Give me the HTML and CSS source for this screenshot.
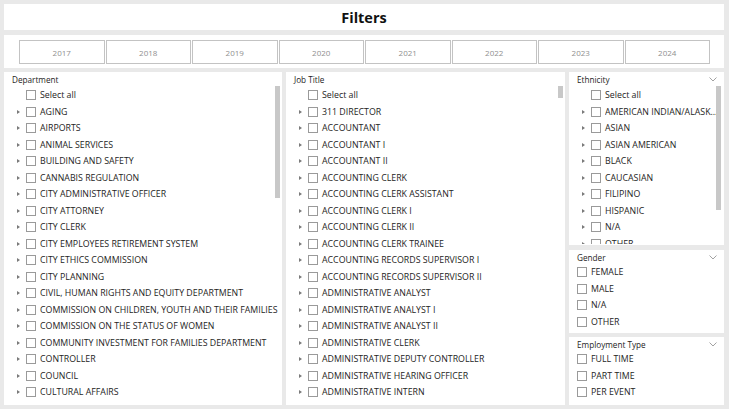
FILE: index.html
```html
<!DOCTYPE html>
<html>
<head>
<meta charset="utf-8">
<link rel="stylesheet" href="styles.css">
</head>
<body>
<div class="page">
  <div class="card title-card">Filters</div>
  <div class="card years">
    <div class="year">2017</div>
    <div class="year">2018</div>
    <div class="year">2019</div>
    <div class="year">2020</div>
    <div class="year">2021</div>
    <div class="year">2022</div>
    <div class="year">2023</div>
    <div class="year">2024</div>
  </div>
  <div class="panels">
    <div class="card slicer dept">
      <div class="slicer-head">Department</div>
      <div class="list">
        <div class="row"><span class="tri none"></span><span class="box"></span><span class="lbl">Select all</span></div>
        <div class="row"><span class="tri"></span><span class="box"></span><span class="lbl">AGING</span></div>
        <div class="row"><span class="tri"></span><span class="box"></span><span class="lbl">AIRPORTS</span></div>
        <div class="row"><span class="tri"></span><span class="box"></span><span class="lbl">ANIMAL SERVICES</span></div>
        <div class="row"><span class="tri"></span><span class="box"></span><span class="lbl">BUILDING AND SAFETY</span></div>
        <div class="row"><span class="tri"></span><span class="box"></span><span class="lbl">CANNABIS REGULATION</span></div>
        <div class="row"><span class="tri"></span><span class="box"></span><span class="lbl">CITY ADMINISTRATIVE OFFICER</span></div>
        <div class="row"><span class="tri"></span><span class="box"></span><span class="lbl">CITY ATTORNEY</span></div>
        <div class="row"><span class="tri"></span><span class="box"></span><span class="lbl">CITY CLERK</span></div>
        <div class="row"><span class="tri"></span><span class="box"></span><span class="lbl">CITY EMPLOYEES RETIREMENT SYSTEM</span></div>
        <div class="row"><span class="tri"></span><span class="box"></span><span class="lbl">CITY ETHICS COMMISSION</span></div>
        <div class="row"><span class="tri"></span><span class="box"></span><span class="lbl">CITY PLANNING</span></div>
        <div class="row"><span class="tri"></span><span class="box"></span><span class="lbl">CIVIL, HUMAN RIGHTS AND EQUITY DEPARTMENT</span></div>
        <div class="row"><span class="tri"></span><span class="box"></span><span class="lbl">COMMISSION ON CHILDREN, YOUTH AND THEIR FAMILIES</span></div>
        <div class="row"><span class="tri"></span><span class="box"></span><span class="lbl">COMMISSION ON THE STATUS OF WOMEN</span></div>
        <div class="row"><span class="tri"></span><span class="box"></span><span class="lbl">COMMUNITY INVESTMENT FOR FAMILIES DEPARTMENT</span></div>
        <div class="row"><span class="tri"></span><span class="box"></span><span class="lbl">CONTROLLER</span></div>
        <div class="row"><span class="tri"></span><span class="box"></span><span class="lbl">COUNCIL</span></div>
        <div class="row"><span class="tri"></span><span class="box"></span><span class="lbl">CULTURAL AFFAIRS</span></div>
      </div>
      <div class="thumb dept-thumb"></div>
    </div>
    <div class="card slicer job">
      <div class="slicer-head">Job Title</div>
      <div class="list">
        <div class="row"><span class="tri none"></span><span class="box"></span><span class="lbl">Select all</span></div>
        <div class="row"><span class="tri"></span><span class="box"></span><span class="lbl">311 DIRECTOR</span></div>
        <div class="row"><span class="tri"></span><span class="box"></span><span class="lbl">ACCOUNTANT</span></div>
        <div class="row"><span class="tri"></span><span class="box"></span><span class="lbl">ACCOUNTANT I</span></div>
        <div class="row"><span class="tri"></span><span class="box"></span><span class="lbl">ACCOUNTANT II</span></div>
        <div class="row"><span class="tri"></span><span class="box"></span><span class="lbl">ACCOUNTING CLERK</span></div>
        <div class="row"><span class="tri"></span><span class="box"></span><span class="lbl">ACCOUNTING CLERK ASSISTANT</span></div>
        <div class="row"><span class="tri"></span><span class="box"></span><span class="lbl">ACCOUNTING CLERK I</span></div>
        <div class="row"><span class="tri"></span><span class="box"></span><span class="lbl">ACCOUNTING CLERK II</span></div>
        <div class="row"><span class="tri"></span><span class="box"></span><span class="lbl">ACCOUNTING CLERK TRAINEE</span></div>
        <div class="row"><span class="tri"></span><span class="box"></span><span class="lbl">ACCOUNTING RECORDS SUPERVISOR I</span></div>
        <div class="row"><span class="tri"></span><span class="box"></span><span class="lbl">ACCOUNTING RECORDS SUPERVISOR II</span></div>
        <div class="row"><span class="tri"></span><span class="box"></span><span class="lbl">ADMINISTRATIVE ANALYST</span></div>
        <div class="row"><span class="tri"></span><span class="box"></span><span class="lbl">ADMINISTRATIVE ANALYST I</span></div>
        <div class="row"><span class="tri"></span><span class="box"></span><span class="lbl">ADMINISTRATIVE ANALYST II</span></div>
        <div class="row"><span class="tri"></span><span class="box"></span><span class="lbl">ADMINISTRATIVE CLERK</span></div>
        <div class="row"><span class="tri"></span><span class="box"></span><span class="lbl">ADMINISTRATIVE DEPUTY CONTROLLER</span></div>
        <div class="row"><span class="tri"></span><span class="box"></span><span class="lbl">ADMINISTRATIVE HEARING OFFICER</span></div>
        <div class="row"><span class="tri"></span><span class="box"></span><span class="lbl">ADMINISTRATIVE INTERN</span></div>
      </div>
      <div class="thumb job-thumb"></div>
    </div>
    <div class="side">
      <div class="card slicer eth">
        <div class="slicer-head">Ethnicity</div>
        <svg class="chev" viewBox="0 0 8 5" width="8" height="5"><path d="M0.5 0.5 L4 4 L7.5 0.5" fill="none" stroke="#8a8a8a" stroke-width="0.8"/></svg>
        <div class="list clip">
          <div class="row"><span class="tri none"></span><span class="box"></span><span class="lbl">Select all</span></div>
          <div class="row"><span class="tri"></span><span class="box"></span><span class="lbl ell">AMERICAN INDIAN/ALASKAN NATIVE</span></div>
          <div class="row"><span class="tri"></span><span class="box"></span><span class="lbl">ASIAN</span></div>
          <div class="row"><span class="tri"></span><span class="box"></span><span class="lbl">ASIAN AMERICAN</span></div>
          <div class="row"><span class="tri"></span><span class="box"></span><span class="lbl">BLACK</span></div>
          <div class="row"><span class="tri"></span><span class="box"></span><span class="lbl">CAUCASIAN</span></div>
          <div class="row"><span class="tri"></span><span class="box"></span><span class="lbl">FILIPINO</span></div>
          <div class="row"><span class="tri"></span><span class="box"></span><span class="lbl">HISPANIC</span></div>
          <div class="row"><span class="tri"></span><span class="box"></span><span class="lbl">N/A</span></div>
          <div class="row"><span class="tri"></span><span class="box"></span><span class="lbl">OTHER</span></div>
        </div>
        <div class="thumb eth-thumb"></div>
      </div>
      <div class="card slicer gender">
        <div class="slicer-head">Gender</div>
        <svg class="chev" viewBox="0 0 8 5" width="8" height="5"><path d="M0.5 0.5 L4 4 L7.5 0.5" fill="none" stroke="#8a8a8a" stroke-width="0.8"/></svg>
        <div class="list flat">
          <div class="row"><span class="box"></span><span class="lbl">FEMALE</span></div>
          <div class="row"><span class="box"></span><span class="lbl">MALE</span></div>
          <div class="row"><span class="box"></span><span class="lbl">N/A</span></div>
          <div class="row"><span class="box"></span><span class="lbl">OTHER</span></div>
        </div>
      </div>
      <div class="card slicer emp">
        <div class="slicer-head">Employment Type</div>
        <svg class="chev" viewBox="0 0 8 5" width="8" height="5"><path d="M0.5 0.5 L4 4 L7.5 0.5" fill="none" stroke="#8a8a8a" stroke-width="0.8"/></svg>
        <div class="list flat">
          <div class="row"><span class="box"></span><span class="lbl">FULL TIME</span></div>
          <div class="row"><span class="box"></span><span class="lbl">PART TIME</span></div>
          <div class="row"><span class="box"></span><span class="lbl">PER EVENT</span></div>
        </div>
      </div>
    </div>
  </div>
</div>
</body>
</html>
```

FILE: styles.css
```css
* { box-sizing: border-box; }
html, body { margin: 0; padding: 0; }
body {
  background: #e9e9e9;
  font-family: "Open Sans", "Liberation Sans", sans-serif;
  color: #252423;
  width: 729px;
  height: 409px;
  overflow: hidden;
}
.page {
  display: flex;
  flex-direction: column;
  padding: 4px 5px 4px 4px;
}
.card { background: #ffffff; }
.title-card {
  height: 26px;
  display: flex;
  align-items: center;
  justify-content: center;
  font-weight: 700;
  font-size: 14.5px;
  color: #111;
}
.years {
  margin-top: 5px;
  height: 33px;
  display: flex;
  padding: 5px 14px 0 15px;
}
.year {
  flex: 1;
  height: 24px;
  border: 1px solid #c3c3c3;
  margin-right: 1px;
  display: flex;
  align-items: center;
  justify-content: center;
  font-size: 8px;
  color: #8f8f8f;
}
.year:last-child { margin-right: 0; }
.panels {
  margin-top: 4px;
  height: 333px;
  display: flex;
  gap: 4px;
}
.slicer {
  position: relative;
  overflow: hidden;
  padding: 3px 0 0 8px;
}
.dept { width: 278px; }
.job { width: 279px; }
.side {
  flex: 1;
  display: flex;
  flex-direction: column;
}
.eth { height: 173px; }
.gender { height: 83px; margin-top: 5px; }
.emp { height: 68px; margin-top: 4px; }
.slicer-head {
  font-size: 8.2px;
  height: 10px;
  line-height: 10px;
  color: #252423;
}
.list { margin-top: 2px; }
.list.flat { margin-top: 1px; }
.list.clip { height: 157px; overflow: hidden; }
.row {
  height: 16.5px;
  display: flex;
  align-items: center;
  white-space: nowrap;
}
.tri {
  width: 0;
  height: 0;
  border-top: 2.5px solid transparent;
  border-bottom: 2.5px solid transparent;
  border-left: 3px solid #7a7a7a;
  margin-left: 5px;
  margin-right: 6px;
  flex: none;
}
.tri.none { border-left-color: transparent; }
.box {
  width: 10px;
  height: 10px;
  border: 1px solid #9a9a9a;
  flex: none;
  margin-right: 4px;
}
.lbl {
  font-family: "Open Sans", "Liberation Sans", sans-serif;
  font-size: 8.8px;
  color: #252423;
}
.ell {
  overflow: hidden;
  text-overflow: ellipsis;
  width: 115px;
  display: inline-block;
}
.thumb {
  position: absolute;
  width: 5px;
  background: #c8c8c8;
  top: 14px;
}
.dept-thumb { left: 271px; height: 112px; }
.job-thumb { left: 272px; height: 12px; }
.eth-thumb { left: 147px; height: 124px; }
.chev {
  position: absolute;
  right: 7px;
  top: 5px;
}
```
